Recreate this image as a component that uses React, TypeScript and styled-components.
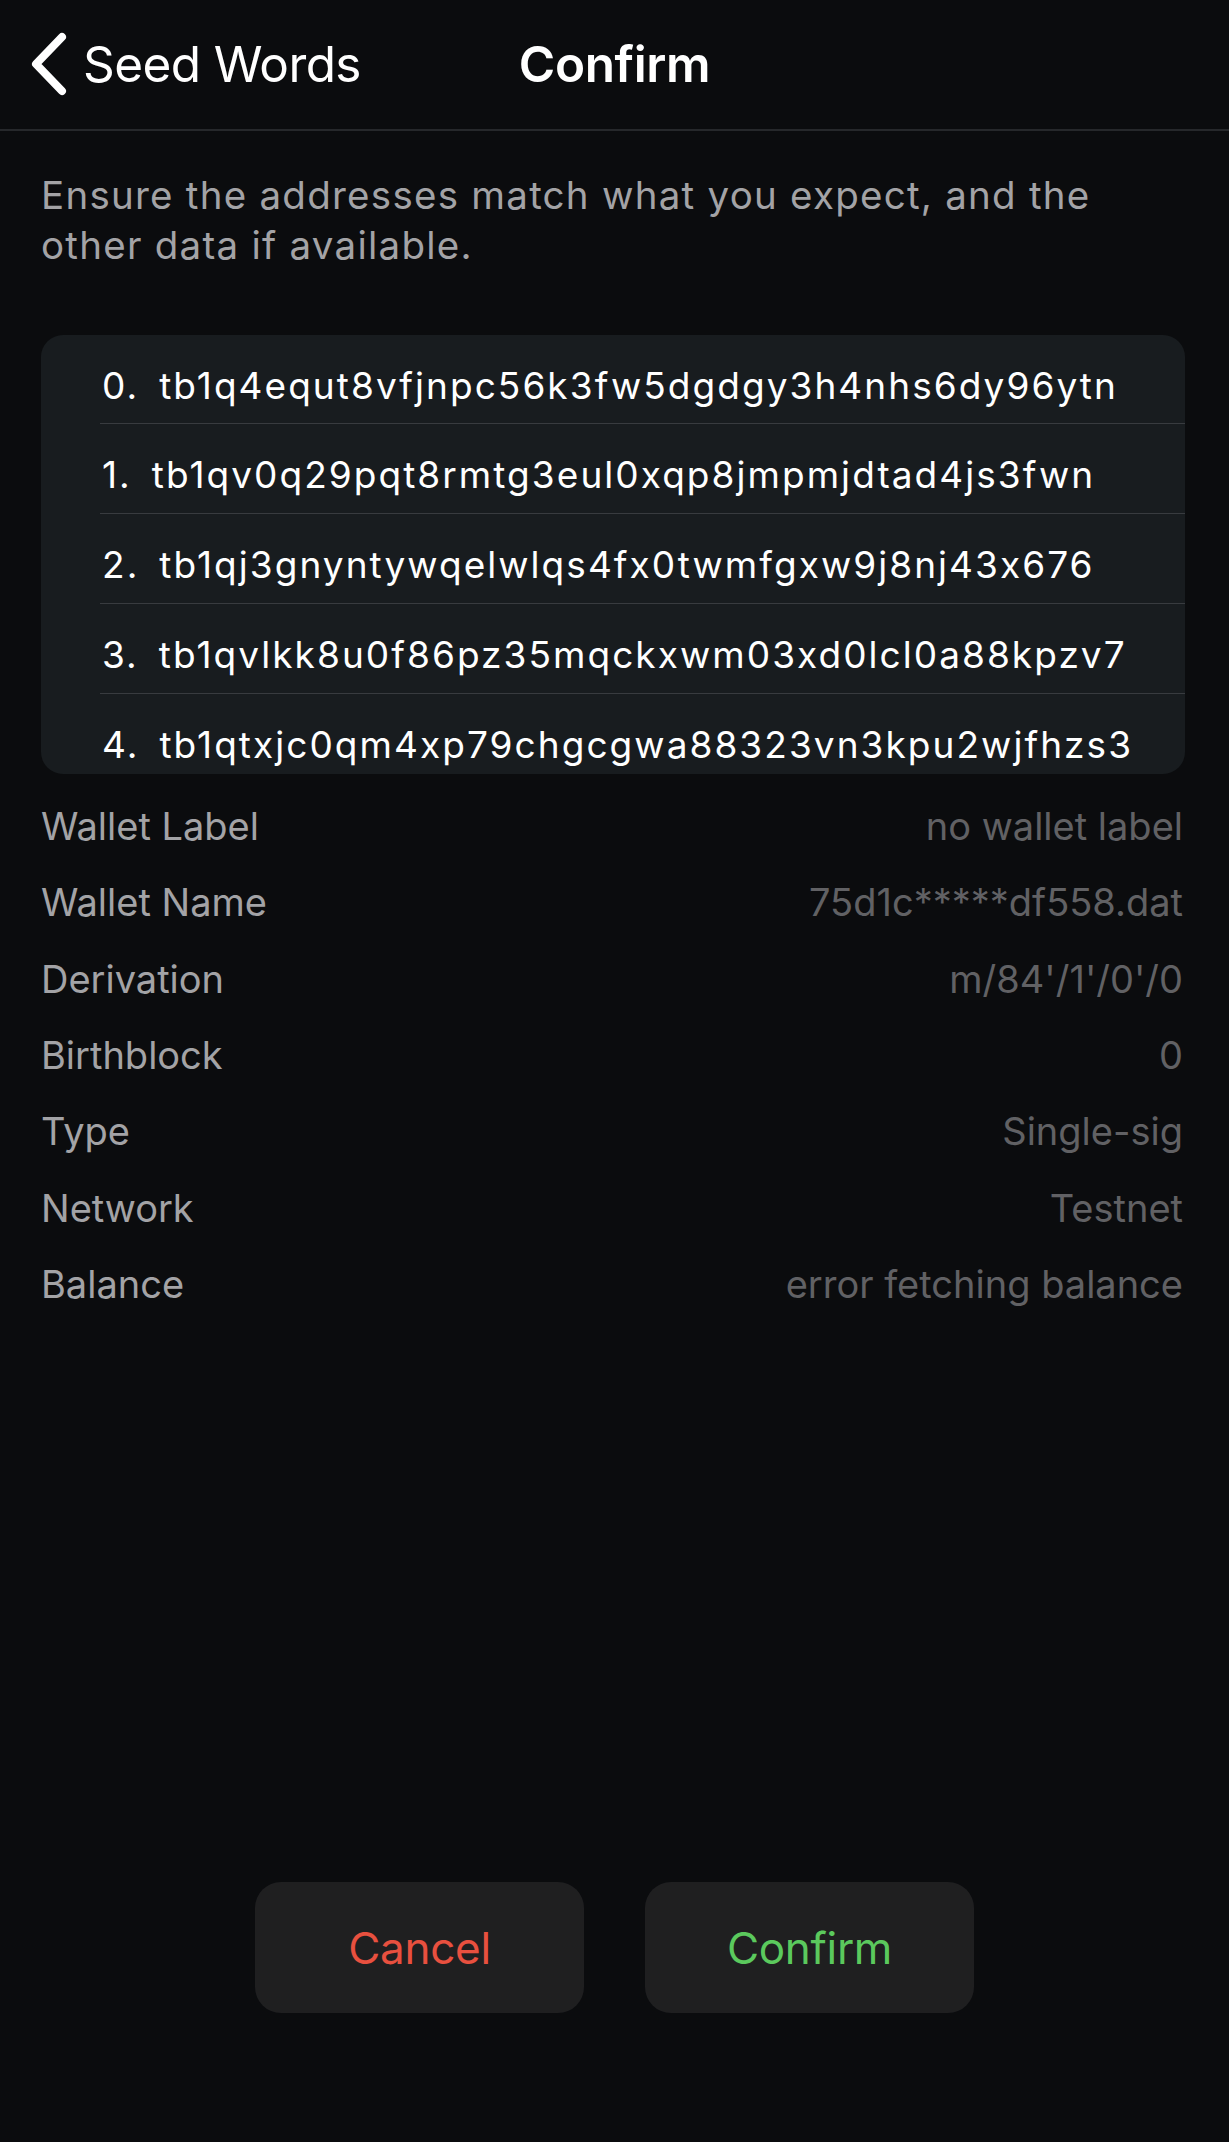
import React from "react";
import styled, { createGlobalStyle } from "styled-components";

const Global = createGlobalStyle`
  html, body { margin: 0; padding: 0; background: #0b0c0e; }
  body { font-family: Inter, "Noto Sans", "Liberation Sans", sans-serif; -webkit-font-smoothing: antialiased; }
  * { box-sizing: border-box; }
`;

const Screen = styled.div`
  width: 1229px;
  height: 2142px;
  background: #0b0c0e;
  display: flex;
  flex-direction: column;
  color: #fff;
  overflow: hidden;
`;

const NavBar = styled.header`
  height: 131px;
  flex-shrink: 0;
  display: grid;
  grid-template-columns: 1fr auto 1fr;
  align-items: center;
  border-bottom: 2px solid #26282b;
  padding: 0 0 2px;
`;

const BackButton = styled.button`
  justify-self: start;
  display: flex;
  align-items: center;
  gap: 15px;
  background: none;
  border: none;
  padding: 0 0 0 30px;
  color: #fff;
  font-family: inherit;
  font-size: 49.5px;
  font-weight: 400;
  letter-spacing: -0.6px;
  cursor: pointer;
`;

const Title = styled.h1`
  margin: 0;
  font-size: 49.5px;
  font-weight: 600;
  letter-spacing: -0.4px;
  color: #fff;
`;

const Content = styled.main`
  flex: 1;
  display: flex;
  flex-direction: column;
  padding: 0 44px 0 41px;
`;

const Intro = styled.p`
  margin: 39px 0 0;
  font-size: 38.5px;
  line-height: 50px;
  color: #a3a3a6;
  letter-spacing: 1.25px;
`;

const AddressCard = styled.div`
  margin-top: 65px;
  height: 439px;
  border-radius: 22px;
  background: #181c1f;
  overflow: hidden;
`;

const AddressRow = styled.div`
  margin-left: 59px;
  height: 90px;
  display: flex;
  align-items: center;
  padding: 12px 0 0 2px;
  border-bottom: 1px solid #383b3f;
  font-size: 37px;
  color: #fff;
  white-space: nowrap;
  letter-spacing: 2.05px;
  &:first-child { height: 89px; }
`;

const Index = styled.span`
  margin-right: 20px;
`;

const Details = styled.dl`
  margin: 14px 0 0;
  padding-right: 2px;
  display: flex;
  flex-direction: column;
`;

const DetailRow = styled.div`
  height: 76.3px;
  display: flex;
  align-items: center;
  justify-content: space-between;
  font-size: 38px;
  letter-spacing: 0;
`;

const Label = styled.dt`
  color: #a3a3a6;
`;

const Value = styled.dd`
  margin: 0;
  color: #616164;
`;

const Spacer = styled.div`
  flex: 1;
`;

const Actions = styled.div`
  display: flex;
  justify-content: center;
  gap: 61px;
  padding-bottom: 129px;
`;

const ActionButton = styled.button<{ $tone: "danger" | "success" }>`
  width: 329px;
  height: 131px;
  border: none;
  border-radius: 26px;
  background: #1f1f20;
  color: ${(p) => (p.$tone === "danger" ? "#e8503f" : "#5bc95d")};
  font-family: inherit;
  font-size: 44px;
  font-weight: 400;
  letter-spacing: -0.3px;
  cursor: pointer;
`;

const addresses = [
  "tb1q4equt8vfjnpc56k3fw5dgdgy3h4nhs6dy96ytn",
  "tb1qv0q29pqt8rmtg3eul0xqp8jmpmjdtad4js3fwn",
  "tb1qj3gnyntywqelwlqs4fx0twmfgxw9j8nj43x676",
  "tb1qvlkk8u0f86pz35mqckxwm03xd0lcl0a88kpzv7",
  "tb1qtxjc0qm4xp79chgcgwa88323vn3kpu2wjfhzs3",
];

const details: [string, string][] = [
  ["Wallet Label", "no wallet label"],
  ["Wallet Name", "75d1c*****df558.dat"],
  ["Derivation", "m/84'/1'/0'/0"],
  ["Birthblock", "0"],
  ["Type", "Single-sig"],
  ["Network", "Testnet"],
  ["Balance", "error fetching balance"],
];

const Chevron = () => (
  <svg width="38" height="64" viewBox="0 0 38 64" fill="none">
    <polyline
      points="32,5 6,32 32,59"
      stroke="#fff"
      strokeWidth="8"
      strokeLinecap="round"
      strokeLinejoin="round"
    />
  </svg>
);

export default function App() {
  return (
    <>
      <Global />
      <Screen>
        <NavBar>
          <BackButton>
            <Chevron />
            Seed Words
          </BackButton>
          <Title>Confirm</Title>
          <div />
        </NavBar>
        <Content>
          <Intro>
            Ensure the addresses match what you expect, and the other data if available.
          </Intro>
          <AddressCard>
            {addresses.map((a, i) => (
              <AddressRow key={a}>
                <Index>{i}.</Index>
                {a}
              </AddressRow>
            ))}
          </AddressCard>
          <Details>
            {details.map(([k, v]) => (
              <DetailRow key={k}>
                <Label>{k}</Label>
                <Value>{v}</Value>
              </DetailRow>
            ))}
          </Details>
          <Spacer />
        </Content>
        <Actions>
          <ActionButton $tone="danger">Cancel</ActionButton>
          <ActionButton $tone="success">Confirm</ActionButton>
        </Actions>
      </Screen>
    </>
  );
}
